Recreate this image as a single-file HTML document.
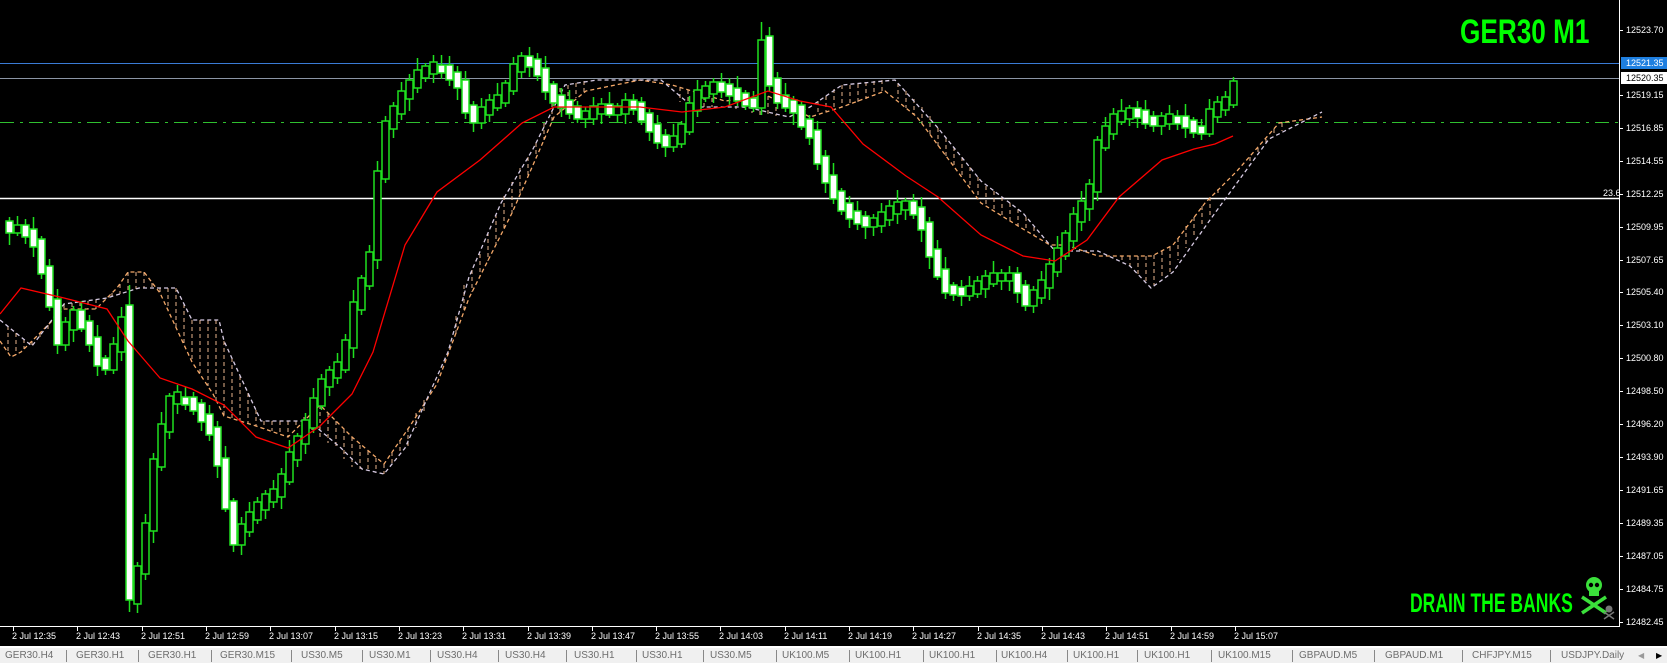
<!DOCTYPE html>
<html><head><meta charset="utf-8">
<style>
html,body{margin:0;padding:0;background:#000;width:1667px;height:663px;overflow:hidden;font-family:"Liberation Sans",sans-serif}
#wrap{position:relative;width:1667px;height:663px}
svg{position:absolute;left:0;top:0}
.pl{position:absolute;left:1626px;color:#fff;font-size:9px;line-height:10px;white-space:nowrap}
.tl{position:absolute;top:631px;color:#fff;font-size:9px;white-space:nowrap}
#tabs{position:absolute;left:0;top:646px;width:1667px;height:17px;background:#f0f0f0;border-top:2px solid #fff;box-sizing:border-box}
.tab{position:absolute;top:1px;color:#6d6d6d;font-size:10px;line-height:14px;white-space:nowrap}
.sep{position:absolute;top:2px;width:1px;height:12px;background:#888}
.big{position:absolute;color:#0f0;font-weight:bold;white-space:nowrap;transform-origin:0 0}
</style></head><body><div id="wrap">
<svg width="1667" height="663" xmlns="http://www.w3.org/2000/svg">
<line x1="0" y1="63.5" x2="1619" y2="63.5" stroke="#3a7bd5"/>
<line x1="0" y1="78.5" x2="1619" y2="78.5" stroke="#8b95a5"/>
<line x1="0" y1="122.5" x2="1619" y2="122.5" stroke="#2fbf2f" stroke-dasharray="14,6,3,6"/>
<line x1="0" y1="198.5" x2="1619" y2="198.5" stroke="#fff" stroke-width="1.5"/>
<path fill="none" stroke="#e9b48c" stroke-width="1" stroke-dasharray="4,3" d="M8 326V353M16 333V355M24 339V349M32 341V346M40 333V338M48 325V330M64 304V309M72 303V309M80 302V309M88 301V309M96 299V309M112 293V296M120 284V294M128 272V291M136 272V289M144 272V288M152 283V288M160 288V293M168 288V310M176 288V327M184 304V345M192 320V362M200 320V374M208 320V386M216 320V401M224 341V416M232 358V419M240 376V421M248 393V423M256 410V426M264 421V429M272 421V431M280 421V434M288 421V437M296 421V427M304 417V421M312 413V430M320 405V437M328 413V443M336 421V447M344 429V459M352 437V467M360 445V469M368 451V471M376 458V473M384 464V474M392 452V466M400 440V454M408 428V449M416 413V428M424 400V411M456 316V334M464 285V312M472 270V292M480 254V277M488 232V261M496 214V245M504 196V229M512 182V213M520 168V195M528 157V176M536 143V158M544 123V140M552 103V122M560 88V112M568 85V104M576 83V98M584 81V92M680 87V102M688 90V106M696 93V107M704 96V107M712 98V107M736 99V109M744 97V111M752 97V113M760 97V115M768 96V117M776 100V116M818 101V115M826 96V112M834 89V109M842 85V107M850 85V104M858 84V102M866 82V99M874 81V96M882 80V92M898 83V99M906 91V108M914 99V114M922 107V124M930 116V135M938 128V146M946 138V156M954 147V165M962 157V176M970 167V187M978 177V199M986 186V206M994 191V211M1002 197V216M1010 203V221M1018 209V226M1026 217V231M1034 227V236M1122 256V262M1130 256V266M1138 256V274M1146 256V284M1154 255V285M1162 251V279M1170 247V274M1178 238V260M1186 226V248M1194 217V237M1202 206V225M1210 197V218M1218 189V196M1250 157V165M1258 148V154M1266 139V143M1274 129V135M1282 123V131"/>
<polyline fill="none" stroke="#f4a868" stroke-width="1.3" stroke-dasharray="4,3" points="0,341 11,357 21,352 43,330 64,309 96,309 117,288 128,272 144,272 160,293 192,362 213,394 224,416 256,426 288,437 320,405 352,437 384,464 410,426 437,384 469,298 512,213 554,117 586,91 640,80 672,85 725,101 768,96 810,117 842,107 885,91 917,117 949,160 981,203 1023,229 1050,245 1066,245 1098,256 1152,256 1173,245 1205,203 1237,171 1279,123 1322,117"/>
<polyline fill="none" stroke="#d6cae2" stroke-width="1.3" stroke-dasharray="4,3" points="0,320 32,346 64,304 107,298 139,288 176,288 192,320 219,320 224,341 261,421 309,421 341,448 362,469 384,474 405,448 448,352 469,277 501,203 533,149 565,85 597,80 661,80 693,107 746,107 789,117 810,107 842,85 895,80 938,128 981,181 1023,213 1055,251 1098,251 1130,266 1151,288 1173,272 1215,213 1269,139 1322,112"/>
<path fill="none" stroke="#1fe01f" stroke-width="1.5" d="M9.5 217V245M17.5 216V236M25.5 219V244M33.5 217V257M41.5 236V279M49.5 259V311M57.5 289V354M65.5 317V351M73.5 306V342M81.5 301V332M89.5 315V352M97.5 325V376M105.5 355V375M113.5 337V374M121.5 307V361M129.5 285V612M137.5 562V613M145.5 514V580M153.5 453V543M161.5 412V471M169.5 393V439M177.5 385V414M185.5 387V410M193.5 392V415M201.5 399V431M209.5 405V441M217.5 421V478M225.5 446V512M233.5 498V552M241.5 517V555M249.5 502V537M257.5 497V524M265.5 490V519M273.5 480V508M281.5 468V509M289.5 440V485M297.5 433V467M305.5 413V454M313.5 388V433M321.5 374V410M329.5 366V396M337.5 353V384M345.5 334V373M353.5 290V358M361.5 275V315M369.5 245V290M377.5 161V269M385.5 116V183M393.5 102V138M401.5 82V120M409.5 74V111M417.5 58V93M425.5 63V82M433.5 55V83M441.5 55V79M449.5 56V86M457.5 66V100M465.5 71V119M473.5 101V132M481.5 98V129M489.5 94V122M497.5 83V111M505.5 80V107M513.5 57V95M521.5 52V78M529.5 47V77M537.5 53V81M545.5 56V100M553.5 81V106M561.5 88V117M569.5 90V119M577.5 101V123M585.5 107V128M593.5 97V125M601.5 98V124M609.5 92V118M617.5 103V122M625.5 93V124M633.5 94V115M641.5 97V125M649.5 109V141M657.5 115V149M665.5 129V157M673.5 124V152M681.5 121V148M689.5 96V135M697.5 80V117M705.5 81V102M713.5 78V103M721.5 73V98M729.5 78V106M737.5 76V106M745.5 90V110M753.5 91V112M761.5 22V115M769.5 27V92M777.5 72V109M785.5 83V112M793.5 96V125M801.5 101V130M809.5 115V145M817.5 121V170M825.5 150V193M833.5 163V204M841.5 188V215M849.5 196V228M857.5 201V230M865.5 211V239M873.5 214V236M881.5 203V233M889.5 200V226M897.5 190V224M905.5 198V220M913.5 194V219M921.5 197V242M929.5 217V269M937.5 240V280M945.5 257V299M953.5 282V301M961.5 280V306M969.5 276V301M977.5 276V298M985.5 270V298M993.5 261V287M1001.5 269V290M1009.5 266V291M1017.5 267V303M1025.5 280V311M1033.5 286V313M1041.5 271V304M1049.5 258V300M1057.5 236V277M1065.5 230V260M1073.5 207V250M1081.5 191V231M1089.5 179V221M1097.5 136V201M1105.5 117V151M1113.5 108V140M1121.5 99V125M1129.5 105V126M1137.5 101V128M1145.5 100V129M1153.5 111V132M1161.5 112V135M1169.5 105V130M1177.5 110V130M1185.5 104V138M1193.5 117V138M1201.5 119V140M1209.5 99V137M1217.5 96V123M1225.5 91V116M1233.5 77V108"/>
<path fill="#fff" stroke="#1fe01f" stroke-width="1.5" d="M6 221h7v12h-7zM22 225h7v12h-7zM30 229h7v18h-7zM38 239h7v35h-7zM46 266h7v41h-7zM54 299h7v46h-7zM78 310h7v19h-7zM86 321h7v24h-7zM94 337h7v29h-7zM102 358h7v12h-7zM126 305h7v295h-7zM182 397h7v8h-7zM190 397h7v14h-7zM198 403h7v19h-7zM206 414h7v21h-7zM214 427h7v39h-7zM222 458h7v51h-7zM230 501h7v44h-7zM438 65h7v8h-7zM446 65h7v15h-7zM454 72h7v16h-7zM462 80h7v33h-7zM470 105h7v18h-7zM526 56h7v11h-7zM534 59h7v17h-7zM542 68h7v24h-7zM550 84h7v19h-7zM558 95h7v13h-7zM566 100h7v14h-7zM574 106h7v13h-7zM606 104h7v11h-7zM630 100h7v10h-7zM638 102h7v19h-7zM646 113h7v19h-7zM654 124h7v19h-7zM662 135h7v12h-7zM718 82h7v10h-7zM726 84h7v12h-7zM734 88h7v13h-7zM742 93h7v13h-7zM750 98h7v10h-7zM766 36h7v50h-7zM774 78h7v25h-7zM782 95h7v13h-7zM790 100h7v13h-7zM798 105h7v22h-7zM806 119h7v19h-7zM814 130h7v34h-7zM822 156h7v27h-7zM830 175h7v24h-7zM838 191h7v20h-7zM846 203h7v16h-7zM854 211h7v13h-7zM862 216h7v11h-7zM910 201h7v14h-7zM918 207h7v23h-7zM926 222h7v35h-7zM934 249h7v28h-7zM942 269h7v24h-7zM950 285h7v10h-7zM958 287h7v9h-7zM1014 273h7v20h-7zM1022 285h7v21h-7zM1134 108h7v10h-7zM1142 110h7v14h-7zM1150 116h7v10h-7zM1174 116h7v8h-7zM1182 116h7v12h-7zM1190 120h7v13h-7zM1198 126h7v8h-7z"/>
<path fill="#000" stroke="#1fe01f" stroke-width="1.5" d="M14 225h7v8h-7zM62 322h7v23h-7zM70 310h7v20h-7zM110 344h7v26h-7zM118 317h7v35h-7zM134 566h7v38h-7zM142 523h7v51h-7zM150 459h7v72h-7zM158 424h7v43h-7zM166 396h7v36h-7zM174 392h7v12h-7zM238 524h7v21h-7zM246 512h7v20h-7zM254 502h7v18h-7zM262 494h7v16h-7zM270 489h7v13h-7zM278 474h7v23h-7zM286 452h7v30h-7zM294 436h7v24h-7zM302 420h7v24h-7zM310 398h7v30h-7zM318 379h7v27h-7zM326 370h7v17h-7zM334 362h7v16h-7zM342 340h7v30h-7zM350 302h7v46h-7zM358 278h7v32h-7zM366 252h7v34h-7zM374 171h7v89h-7zM382 121h7v58h-7zM390 106h7v23h-7zM398 91h7v23h-7zM406 80h7v19h-7zM414 70h7v18h-7zM422 66h7v12h-7zM430 62h7v12h-7zM478 107h7v16h-7zM486 100h7v15h-7zM494 95h7v13h-7zM502 83h7v20h-7zM510 64h7v27h-7zM518 56h7v16h-7zM582 111h7v8h-7zM590 106h7v13h-7zM598 104h7v10h-7zM614 106h7v9h-7zM622 100h7v14h-7zM670 136h7v11h-7zM678 124h7v20h-7zM686 103h7v29h-7zM694 90h7v21h-7zM702 86h7v12h-7zM710 82h7v12h-7zM758 40h7v68h-7zM870 218h7v9h-7zM878 212h7v14h-7zM886 206h7v14h-7zM894 202h7v12h-7zM902 201h7v9h-7zM966 286h7v10h-7zM974 281h7v13h-7zM982 276h7v13h-7zM990 273h7v11h-7zM998 273h7v8h-7zM1006 273h7v8h-7zM1030 290h7v16h-7zM1038 280h7v18h-7zM1046 264h7v24h-7zM1054 248h7v24h-7zM1062 233h7v23h-7zM1070 214h7v27h-7zM1078 201h7v21h-7zM1086 184h7v25h-7zM1094 140h7v52h-7zM1102 126h7v22h-7zM1110 114h7v20h-7zM1118 111h7v11h-7zM1126 108h7v11h-7zM1158 116h7v10h-7zM1166 114h7v10h-7zM1206 109h7v25h-7zM1214 102h7v15h-7zM1222 97h7v13h-7zM1230 81h7v24h-7z"/>
<polyline fill="none" stroke="#f00" stroke-width="1.3" points="0,314 21,288 64,298 107,309 128,341 160,378 192,389 224,405 256,437 288,448 320,426 352,394 373,352 405,245 437,192 480,160 522,123 554,107 597,107 640,107 682,112 725,107 768,91 800,101 831,107 863,144 906,176 938,197 981,235 1023,256 1055,261 1087,240 1119,197 1162,160 1194,149 1215,144 1233,136"/>
<line x1="1619.5" y1="0" x2="1619.5" y2="626" stroke="#fff"/>
<line x1="0" y1="626.5" x2="1620" y2="626.5" stroke="#fff"/>
<path stroke="#fff" d="M1619 30.5h4M1619 95.5h4M1619 128.5h4M1619 161.5h4M1619 194.5h4M1619 227.5h4M1619 260.5h4M1619 292.5h4M1619 325.5h4M1619 358.5h4M1619 391.5h4M1619 424.5h4M1619 457.5h4M1619 490.5h4M1619 523.5h4M1619 556.5h4M1619 589.5h4M1619 622.5h4M13.5 626v5M77.5 626v5M142.5 626v5M206.5 626v5M270.5 626v5M335.5 626v5M399.5 626v5M463.5 626v5M528.5 626v5M592.5 626v5M656.5 626v5M720.5 626v5M785.5 626v5M849.5 626v5M913.5 626v5M978.5 626v5M1042.5 626v5M1106.5 626v5M1171.5 626v5M1235.5 626v5"/>
<g fill="#3be03b"><ellipse cx="1594" cy="585" rx="8" ry="8"/><rect x="1589" y="590" width="10" height="6"/><line x1="1582" y1="597" x2="1606" y2="613" stroke="#3be03b" stroke-width="3.5"/><line x1="1606" y1="597" x2="1582" y2="613" stroke="#3be03b" stroke-width="3.5"/><circle cx="1591" cy="585" r="2.2" fill="#000"/><circle cx="1597" cy="585" r="2.2" fill="#000"/></g>
<g fill="#777"><circle cx="1609" cy="609" r="3.5"/><line x1="1604" y1="612" x2="1614" y2="619" stroke="#777" stroke-width="1.5"/><line x1="1614" y1="612" x2="1604" y2="619" stroke="#777" stroke-width="1.5"/></g>
</svg>
<div class="big" style="left:1460px;top:15px;font-size:34px;line-height:34px;transform:scaleX(0.77)">GER30 M1</div>
<div class="big" style="left:1410px;top:590px;font-size:27px;line-height:27px;transform:scaleX(0.65)">DRAIN THE BANKS</div>
<div class="pl" style="top:25px">12523.70</div>
<div class="pl" style="left:1621px;top:57px;background:#1e7fe0;color:#fff;padding:1px 4px 1px 5px">12521.35</div>
<div class="pl" style="left:1621px;top:72px;background:#fff;color:#000;padding:1px 4px 1px 5px">12520.35</div>
<div class="pl" style="top:90px">12519.15</div>
<div class="pl" style="top:123px">12516.85</div>
<div class="pl" style="top:156px">12514.55</div>
<div class="pl" style="top:189px">12512.25</div>
<div class="pl" style="top:222px">12509.95</div>
<div class="pl" style="top:255px">12507.65</div>
<div class="pl" style="top:287px">12505.40</div>
<div class="pl" style="top:320px">12503.10</div>
<div class="pl" style="top:353px">12500.80</div>
<div class="pl" style="top:386px">12498.50</div>
<div class="pl" style="top:419px">12496.20</div>
<div class="pl" style="top:452px">12493.90</div>
<div class="pl" style="top:485px">12491.65</div>
<div class="pl" style="top:518px">12489.35</div>
<div class="pl" style="top:551px">12487.05</div>
<div class="pl" style="top:584px">12484.75</div>
<div class="pl" style="top:617px">12482.45</div>
<div style="position:absolute;left:1603px;top:188px;color:#fff;font-size:9px">23.6</div>
<div class="tl" style="left:12px">2 Jul 12:35</div>
<div class="tl" style="left:76px">2 Jul 12:43</div>
<div class="tl" style="left:141px">2 Jul 12:51</div>
<div class="tl" style="left:205px">2 Jul 12:59</div>
<div class="tl" style="left:269px">2 Jul 13:07</div>
<div class="tl" style="left:334px">2 Jul 13:15</div>
<div class="tl" style="left:398px">2 Jul 13:23</div>
<div class="tl" style="left:462px">2 Jul 13:31</div>
<div class="tl" style="left:527px">2 Jul 13:39</div>
<div class="tl" style="left:591px">2 Jul 13:47</div>
<div class="tl" style="left:655px">2 Jul 13:55</div>
<div class="tl" style="left:719px">2 Jul 14:03</div>
<div class="tl" style="left:784px">2 Jul 14:11</div>
<div class="tl" style="left:848px">2 Jul 14:19</div>
<div class="tl" style="left:912px">2 Jul 14:27</div>
<div class="tl" style="left:977px">2 Jul 14:35</div>
<div class="tl" style="left:1041px">2 Jul 14:43</div>
<div class="tl" style="left:1105px">2 Jul 14:51</div>
<div class="tl" style="left:1170px">2 Jul 14:59</div>
<div class="tl" style="left:1234px">2 Jul 15:07</div>
<div id="tabs">
<div class="tab" style="left:5px">GER30.H4</div><div class="sep" style="left:66px"></div>
<div class="tab" style="left:76px">GER30.H1</div><div class="sep" style="left:138px"></div>
<div class="tab" style="left:148px">GER30.H1</div><div class="sep" style="left:211px"></div>
<div class="tab" style="left:220px">GER30.M15</div><div class="sep" style="left:291px"></div>
<div class="tab" style="left:301px">US30.M5</div><div class="sep" style="left:362px"></div>
<div class="tab" style="left:369px">US30.M1</div><div class="sep" style="left:430px"></div>
<div class="tab" style="left:437px">US30.H4</div><div class="sep" style="left:498px"></div>
<div class="tab" style="left:505px">US30.H4</div><div class="sep" style="left:566px"></div>
<div class="tab" style="left:574px">US30.H1</div><div class="sep" style="left:636px"></div>
<div class="tab" style="left:642px">US30.H1</div><div class="sep" style="left:703px"></div>
<div class="tab" style="left:710px">US30.M5</div><div class="sep" style="left:776px"></div>
<div class="tab" style="left:782px">UK100.M5</div><div class="sep" style="left:849px"></div>
<div class="tab" style="left:855px">UK100.H1</div><div class="sep" style="left:923px"></div>
<div class="tab" style="left:929px">UK100.H1</div><div class="sep" style="left:996px"></div>
<div class="tab" style="left:1001px">UK100.H4</div><div class="sep" style="left:1067px"></div>
<div class="tab" style="left:1073px">UK100.H1</div><div class="sep" style="left:1137px"></div>
<div class="tab" style="left:1144px">UK100.H1</div><div class="sep" style="left:1211px"></div>
<div class="tab" style="left:1218px">UK100.M15</div><div class="sep" style="left:1292px"></div>
<div class="tab" style="left:1299px">GBPAUD.M5</div><div class="sep" style="left:1374px"></div>
<div class="tab" style="left:1385px">GBPAUD.M1</div><div class="sep" style="left:1462px"></div>
<div class="tab" style="left:1472px">CHFJPY.M15</div><div class="sep" style="left:1550px"></div>
<div class="tab" style="left:1561px">USDJPY.Daily</div>
<div class="tab" style="left:1638px;font-size:8px;color:#999">&#9664;</div>
<div class="tab" style="left:1656px;font-size:8px;color:#000">&#9654;</div>
</div>
</div>
</body></html>
